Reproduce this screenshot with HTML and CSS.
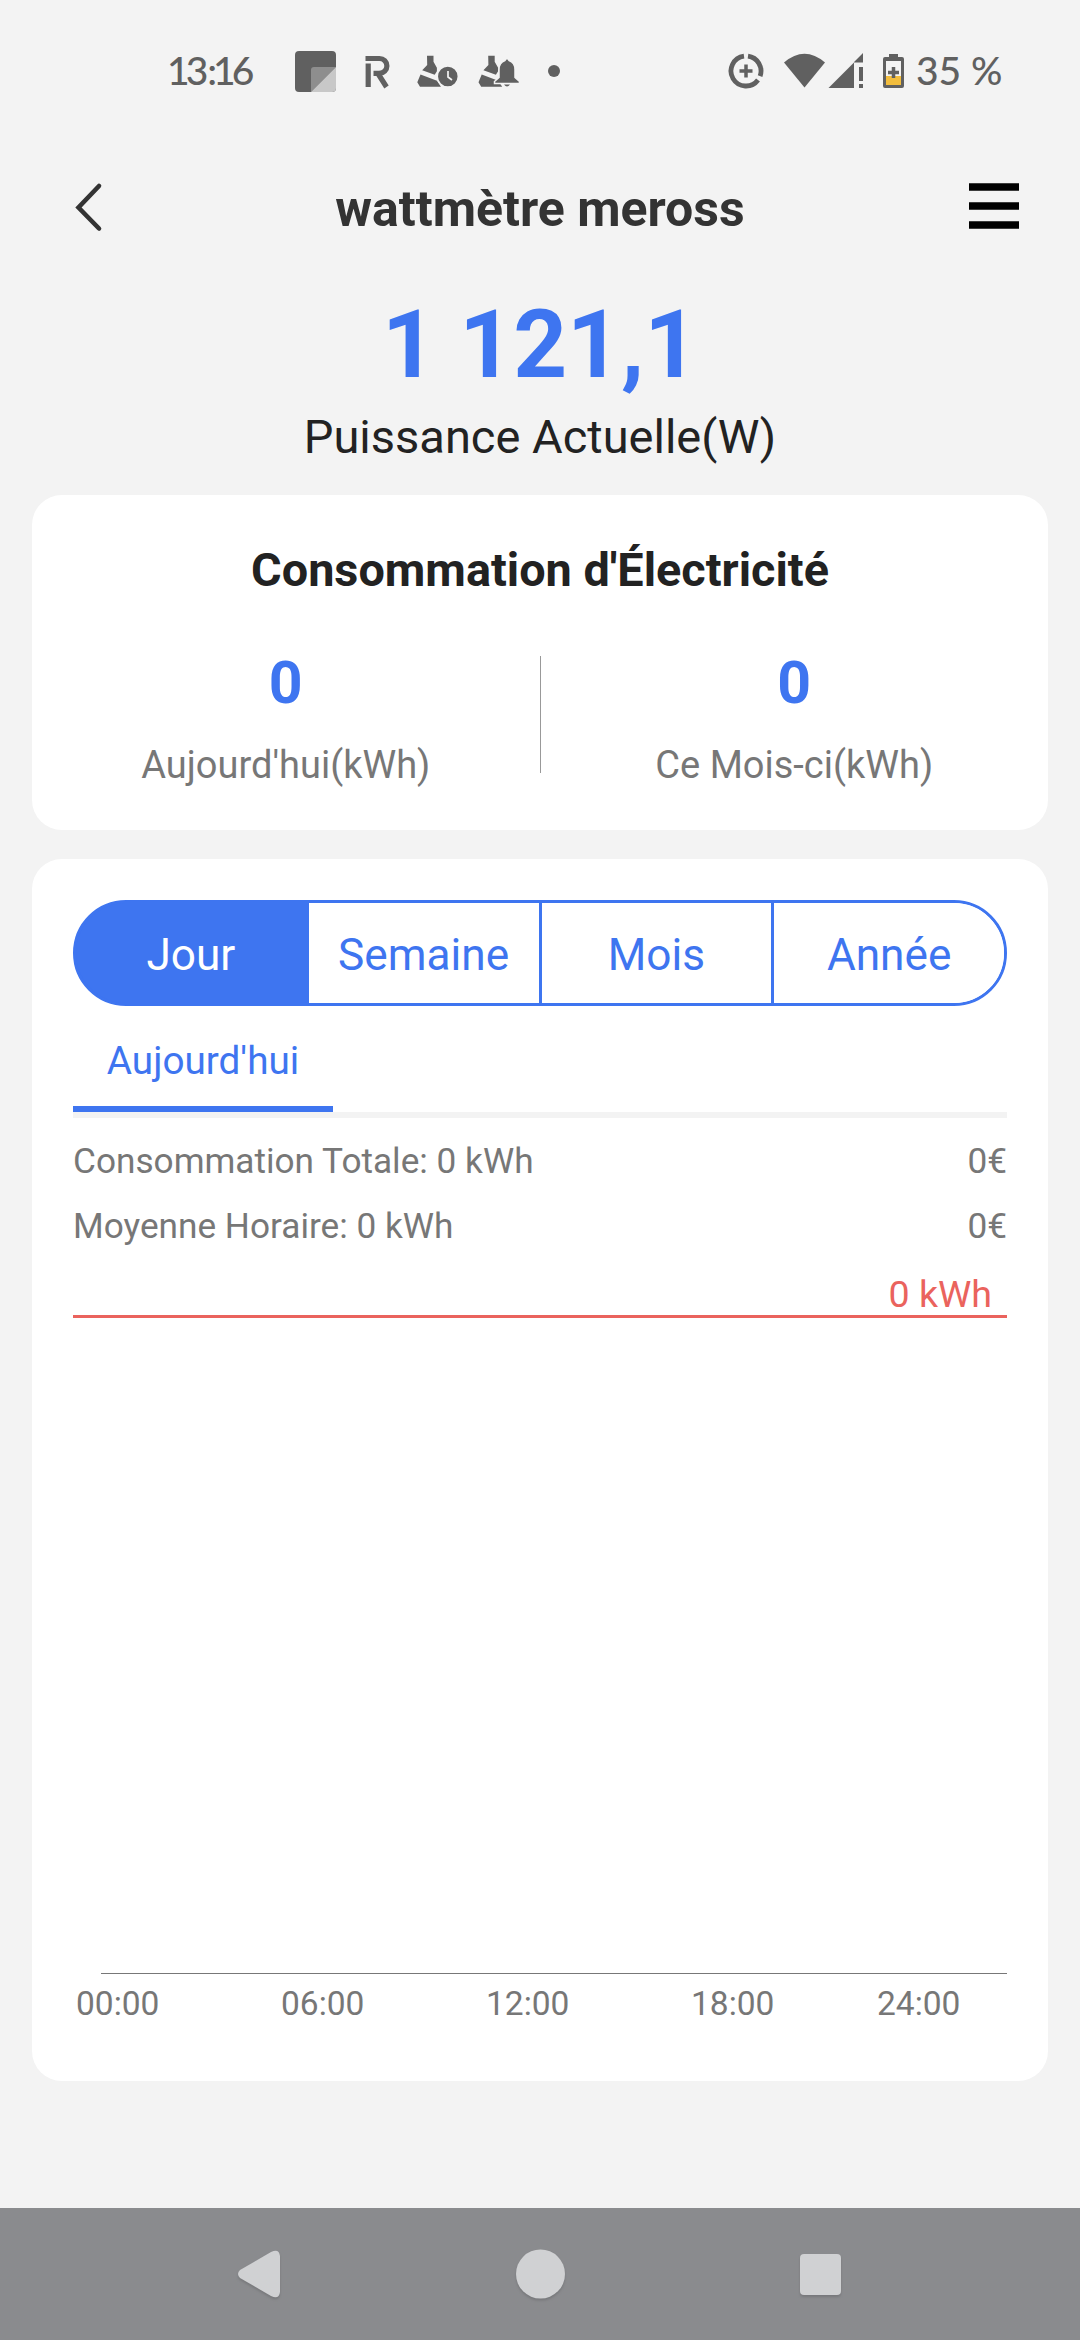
FILE: index.html
```html
<!DOCTYPE html>
<html lang="fr">
<head>
<meta charset="utf-8">
<title>wattmètre meross</title>
<link rel="stylesheet" href="styles.css">
</head>
<body>
<div class="status">
  <span class="clock">1<span class="loose">3</span>:16</span>
  <svg class="status-left" width="265" height="42" viewBox="0 0 265 42">
    <rect width="41" height="41" rx="4" fill="#606060"/>
    <path d="M16 41V19q0-3 3-3h22z" fill="#8e8e8e"/>
    <path d="M16 41 41 16v21q0 4-4 4z" fill="#c8c8c8"/>
    <g fill="none" stroke="#606060" stroke-width="5.200">
      <path d="M70.500 7.500H84.500A7.400 7.400 0 0 1 84.500 22.300H78.500M82 21 91.500 36M73.200 12.500V36"/>
    </g>
    <g fill="#606060">
      <path d="M132 4.700h6.500v6l3.400 6v3.500l-2.200 3.500-12.500-4.500 5-5.200zM125.500 23.500l16.500 6.200 4 6h-21l-2.700-4.400z"/>
      <circle cx="152.800" cy="25.500" r="10.500" stroke="#f3f3f3" stroke-width="1.500"/>
      <path d="M193.200 4.700h6.500v6l3.400 6v3.500l-2.200 3.500-12.500-4.500 5-5.200zM186.700 23.500l16.500 6.200 4 6h-21l-2.700-4.400z"/>
      <path stroke="#f3f3f3" stroke-width="1.500" d="M199.500 32.500v-2l4.500-4v-8q0-7 6-9 2-4 4 0 6 2 6 9v8l4.500 4v2z"/>
      <path d="M209 33.500h6q-3 4-6 0z"/>
      <circle cx="259" cy="20" r="6"/>
    </g>
    <path d="M153 20v6l4 3" fill="none" stroke="#f3f3f3" stroke-width="1.700"/>
  </svg>
  <svg class="status-right" width="180" height="40" viewBox="0 0 180 40">
    <g fill="none" stroke="#606060" stroke-width="4.800">
      <path d="M20 3.150A15 15 0 0 1 32.100 23.100M30 27A15 15 0 1 1 16 3.150"/>
      <path d="M11.500 18h13M18 11.500v13" stroke-width="3.500"/>
    </g>
    <g fill="#606060">
      <path d="M56 9.500Q76.500-8 97 9.500L76.500 34.500z"/>
      <path d="M100.500 35 126 9.500V35zM126 9l9-9v9.500h-9zM131 14h4v14h-4zM131 31h4v4h-4z"/>
      <path d="M161 1h9v3h4q2 0 2 2v27q0 2-2 2h-17q-2 0-2-2V6q0-2 2-2h4z"/>
    </g>
    <path d="M158 8h15v15h-15z" fill="#f3f3f3"/><path d="M158 23h15v9h-15z" fill="#f2bd3d"/>
    <path d="M160 19.500h11M165.500 14v11" stroke="#606060" stroke-width="3.500"/>
  </svg>
  <span class="battery">35 %</span>
</div>
<header class="header">
  <svg width="50" height="50" viewBox="0 0 50 50"><path d="M26 4 5.500 25.500 26 46.500" fill="none" stroke="#333" stroke-width="4.600" stroke-linecap="round"/></svg>
  <h1 class="title">wattmètre meross</h1>
  <svg width="50" height="50" viewBox="0 0 50 50"><path d="M0 5h50M0 24h50M0 43h50" stroke="#000" stroke-width="7.600"/></svg>
</header>
<section class="power">
  <div class="power-value">1 121,1</div>
  <div class="power-label">Puissance Actuelle(W)</div>
</section>
<section class="card summary">
  <h2 class="summary-title">Consommation d'Électricité</h2>
  <div class="stats">
    <div class="stat"><b class="stat-value">0</b><span class="stat-label">Aujourd'hui(kWh)</span></div>
    <div class="stat"><b class="stat-value">0</b><span class="stat-label">Ce Mois-ci(kWh)</span></div>
  </div>
</section>
<section class="card history">
  <div class="periods">
    <span class="period active">Jour</span><span class="period">Semaine</span><span class="period">Mois</span><span class="period">Année</span>
  </div>
  <div class="days"><span class="day">Aujourd'hui</span></div>
  <div class="row"><span>Consommation Totale: 0 kWh</span><span>0€</span></div>
  <div class="row"><span>Moyenne Horaire: 0 kWh</span><span>0€</span></div>
  <div class="limit">0 kWh</div>
  <div class="plot"></div>
  <div class="axis"><span>00:00</span><span>06:00</span><span>12:00</span><span>18:00</span><span>24:00</span></div>
</section>
<nav class="nav">
  <svg class="nav-icons" width="1080" height="132" viewBox="0 0 1080 132">
    <g fill="#d0d1d3">
      <path d="M240 62 271 44q8-4 9 4v36q-1 8-9 4L240 70q-4-4 0-8z"/>
      <circle cx="540.500" cy="66" r="24.500"/>
      <rect x="800" y="46" width="41" height="41" rx="4"/>
    </g>
  </svg>
</nav>
</body>
</html>
```
FILE: styles.css
```css
* { box-sizing: border-box; }
body {
  margin: 0;
  width: 1080px;
  height: 2340px;
  display: flex;
  flex-direction: column;
  background: #f3f3f3;
  color: #222;
  font-family: Roboto, sans-serif;
  overflow: hidden;
}
h1, h2 { margin: 0; }
svg { display: block; flex: none; }
.status {
  height: 142px;
  padding-left: 167px;
  display: flex;
  align-items: flex-start;
  color: #606060;
  font: 500 39px/46px Lato, sans-serif;
}
.clock { width: 128px; padding-top: 47px; letter-spacing: -4px; }
.loose { letter-spacing: -1px; }
.status-left { margin-top: 51px; }
.status-right { margin: 53px 0 0 168px; }
.battery { margin: 47px 0 0 8px; white-space: nowrap; }
.header {
  height: 132px;
  padding: 0 61px 0 73px;
  display: flex;
  justify-content: space-between;
  align-items: center;
}
.header svg { margin-bottom: 2px; }
.title { padding-top: 2px; margin-right: 12px; font-size: 50px; line-height: 60px; font-weight: 700; color: #333; }
.power { height: 221px; text-align: center; }
.power-value { height: 128px; font-size: 94px; line-height: 142px; font-weight: 700; color: #3e75f0; }
.power-label { font-size: 47px; line-height: 70px; }
.card { margin: 0 32px; background: #fff; border-radius: 30px; flex: none; }
.summary { height: 335px; padding-top: 45px; text-align: center; }
.summary-title { height: 116px; font-size: 46.8px; line-height: 60px; }
.stats { display: flex; height: 117px; }
.stat { flex: 1; display: flex; flex-direction: column; }
.stat + .stat { border-left: 1px solid #999; }
.stat-value { flex: none; height: 77px; font-size: 59px; line-height: 54px; color: #3e75f0; }
.stat-label { font-size: 38px; line-height: 64px; color: #777; }
.history { margin-top: 29px; height: 1222px; padding: 41px 41px 0; }
.periods {
  display: flex;
  height: 106px;
  border: 3px solid #3e75f0;
  border-radius: 53px;
  overflow: hidden;
  font-size: 44.2px;
  line-height: 104px;
  text-align: center;
  color: #3e75f0;
  background: linear-gradient(90deg, #3e75f0 60px, #fff 60px);
}
.period { flex: 1; background: #fff; }
.period + .period { border-left: 3px solid #3e75f0; }
.period.active { background: #3e75f0; color: #fff; }
.days { height: 112px; border-bottom: 6px solid #f3f3f3; display: flex; }
.day {
  width: 260px;
  border-bottom: 6px solid #3e75f0;
  color: #3e75f0;
  font-size: 38.7px;
  line-height: 110px;
  text-align: center;
}
.row { display: flex; justify-content: space-between; height: 65px; font-size: 35.2px; line-height: 87px; color: #777; }
.limit {
  height: 70px;
  padding-right: 15px;
  border-bottom: 3px solid #ea635d;
  text-align: right;
  color: #ea635d;
  font-size: 37.6px;
  line-height: 92px;
}
.plot { height: 656px; margin-left: 28px; border-bottom: 1px solid #777; }
.axis { display: grid; grid-template-columns: 205px 205px 205px 186px 90px; padding-left: 3px; font-size: 33.5px; line-height: 59px; color: #777; }
.nav { margin-top: auto; height: 132px; flex: none; background: #8a8b8e; }
.nav-icons { filter: drop-shadow(0 2px 1px #77787b); }
```
